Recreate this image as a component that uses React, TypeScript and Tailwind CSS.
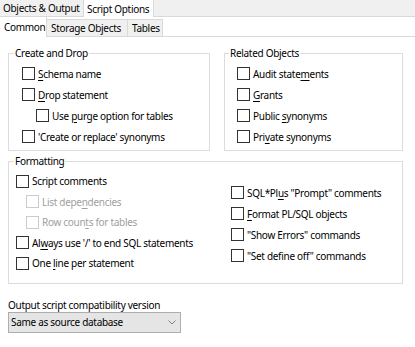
import React from "react";

const Box = ({ disabled = false }: { disabled?: boolean }) => (
  <span
    className={
      "inline-block w-[13px] h-[13px] shrink-0 border bg-white mr-[3px] " +
      (disabled ? "border-[#cccccc]" : "border-[#333333]")
    }
  />
);

const U = ({ children }: { children: React.ReactNode }) => (
  <span className="underline underline-offset-[2px] decoration-[1px]">{children}</span>
);

const Row = ({
  children,
  disabled = false,
  indent = "",
  h = "h-[21px]",
}: {
  children: React.ReactNode;
  disabled?: boolean;
  indent?: string;
  h?: string;
}) => (
  <div className={"flex items-center whitespace-nowrap " + h + " " + indent + (disabled ? " text-[#a0a0a0]" : "")}>
    <Box disabled={disabled} />
    <span>{children}</span>
  </div>
);

export default function App() {
  return (
    <div className="w-[415px] h-[347px] bg-white overflow-hidden font-['Noto_Sans',sans-serif] text-[10px] leading-[14px] tracking-[-0.3px] text-black">
      {/* outer tabs */}
      <div className="flex h-[17px] bg-[#f0f0f0] border-b border-[#d9d9d9]">
        <div className="w-[84px] h-[16px] pl-[3px] border-r border-[#d9d9d9] flex items-center">Objects &amp; Output</div>
        <div className="w-[70px] h-[17px] -mb-px bg-white pl-[3px] border-r border-[#d9d9d9] flex items-center">Script Options</div>
      </div>
      {/* inner tabs */}
      <div className="flex items-end h-[20px] border-b border-[#d9d9d9]">
        <div className="w-[47px] h-[20px] -mb-px bg-white border-r border-[#d9d9d9] pl-[4px] flex items-center">Common</div>
        <div className="w-[81px] h-[17px] bg-[#f0f0f0] border-r border-t border-[#d9d9d9] pl-[4px] flex items-center">Storage Objects</div>
        <div className="w-[35px] h-[17px] bg-[#f0f0f0] border-r border-t border-[#d9d9d9] pl-[4px] flex items-center">Tables</div>
      </div>
      {/* content */}
      <div className="px-[8px] pt-[9px]">
        <div className="flex gap-[14px]">
          <fieldset className="w-[202px] border border-[#dcdcdc] pb-[3px]">
            <legend className="ml-[5px] px-px leading-[14px]">Create and Drop</legend>
            <div className="pt-[3px] pl-[13px]">
              <Row><U>S</U>chema name</Row>
              <Row><U>D</U>rop statement</Row>
              <Row indent="pl-[14px]">Use <U>p</U>urge option for tables</Row>
              <Row>'Create or replace' synonyms</Row>
            </div>
          </fieldset>
          <fieldset className="w-[179px] border border-[#dcdcdc] pb-[3px]">
            <legend className="ml-[4px] px-px leading-[14px]">Related Objects</legend>
            <div className="pt-[3px] pl-[12px]">
              <Row>Audit state<U>m</U>ents</Row>
              <Row><U>G</U>rants</Row>
              <Row>Public <U>s</U>ynonyms</Row>
              <Row>Pri<U>v</U>ate synonyms</Row>
            </div>
          </fieldset>
        </div>
        <fieldset className="mt-[3px] w-[395px] border border-[#dcdcdc] pb-[9px]">
          <legend className="ml-[5px] px-px leading-[14px]">Formatting</legend>
          <div className="flex pl-[7px]">
            <div className="w-[215px] pt-[3px]">
              <Row h="h-[20.5px]">Script comments</Row>
              <Row h="h-[20.5px]" indent="pl-[10px]" disabled>List depe<U>n</U>dencies</Row>
              <Row h="h-[20.5px]" indent="pl-[10px]" disabled>Row coun<U>t</U>s for tables</Row>
              <Row h="h-[20.5px]">Al<U>w</U>ays use '/' to end SQL statements</Row>
              <Row h="h-[20.5px]">One <U>l</U>ine per statement</Row>
            </div>
            <div className="flex-1 pt-[14px]">
              <Row>SQL*Pl<U>u</U>s "Prompt" comments</Row>
              <Row><U>F</U>ormat PL/SQL objects</Row>
              <Row>"Show Errors" commands</Row>
              <Row>"Set define off" commands</Row>
            </div>
          </div>
        </fieldset>
        <div className="mt-[14px] h-[14px] flex items-center">Output script compatibility version</div>
        <div className="w-[173px] h-[21px] bg-[#e5e5e5] border border-[#adadad] flex items-center justify-between pl-[2px] pr-[4px]">
          <span>Same as source database</span>
          <svg width="8" height="5" viewBox="0 0 8 5" className="shrink-0">
            <path d="M0.5 0.5 L4 4 L7.5 0.5" fill="none" stroke="#808080" strokeWidth="1" />
          </svg>
        </div>
      </div>
    </div>
  );
}
